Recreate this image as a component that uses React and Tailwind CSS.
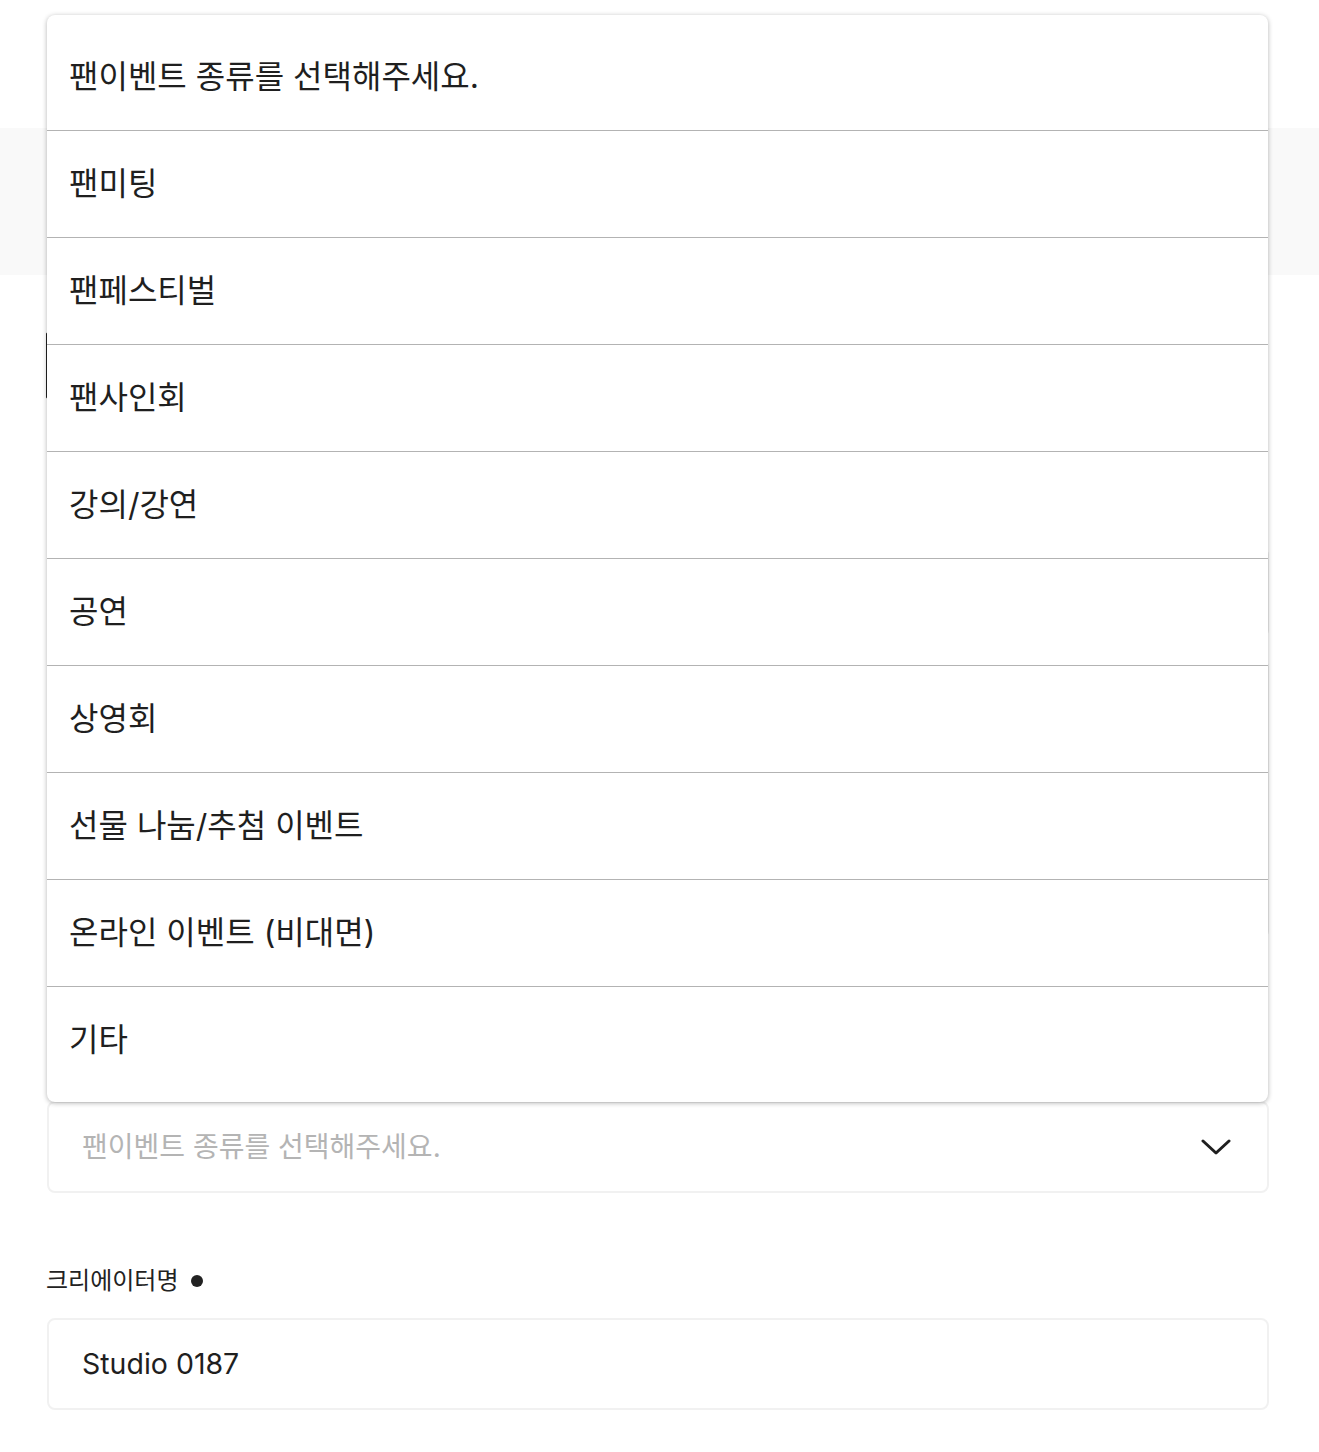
import React from 'react'

const FONT = { fontFamily: 'Inter, "Noto Sans CJK KR", sans-serif' }

const EVENT_TYPES = [
  '팬이벤트 종류를 선택해주세요.',
  '팬미팅',
  '팬페스티벌',
  '팬사인회',
  '강의/강연',
  '공연',
  '상영회',
  '선물 나눔/추첨 이벤트',
  '온라인 이벤트 (비대면)',
  '기타',
]

// ── Chevron for the closed select ─────────────────────────────
function Chevron() {
  return (
    <svg width="30" height="16" viewBox="0 0 30 16" fill="none">
      <path d="M2 2L15 14L28 2" stroke="#1f1f1f" strokeWidth="3" strokeLinecap="round" strokeLinejoin="round" />
    </svg>
  )
}

function Label({ children, required }) {
  return (
    <div className="flex items-center h-[32px] text-[24px] text-[#222]">
      <span>{children}</span>
      {required && <span className="ml-[13px] w-[12px] h-[12px] rounded-full bg-[#222]" />}
    </div>
  )
}

export default function App() {
  return (
    <div className="relative w-full min-h-[1452px] bg-white" style={FONT}>
      {/* Header */}
      <div className="h-[128px] bg-white" />
      {/* Step band */}
      <div className="h-[147px] bg-[#f9f9f9]" />

      {/* Form (top part sits behind the open menu) */}
      <div className="flex flex-col pl-[46px] pr-[50px] pb-[42px]">
        <div className="mt-[57px] w-[320px] h-[67px] rounded-[2px] border border-[#222]" />
        <div className="mt-[95px] h-[32px]" />
        <div className="mt-[21px] h-[91px] rounded-lg border border-[#ededed] ml-[1px]" />
        <div className="mt-[21px] h-[280px] rounded-lg border border-[#ededed] ml-[1px]" />
        <div className="mt-[19px] h-[32px]" />
        <div className="mt-[58px] h-[32px]" />

        {/* Closed select */}
        <div className="mt-[21px] ml-[1px] h-[92px] rounded-lg border-2 border-[#f1f1f1] flex items-center justify-between pl-[33px] pr-[36px]">
          <span className="text-[28px] text-[#b4b4b4]">팬이벤트 종류를 선택해주세요.</span>
          <Chevron />
        </div>

        <div className="mt-[72px]">
          <Label required>크리에이터명</Label>
        </div>
        <div className="mt-[21px] ml-[1px] h-[92px] rounded-lg border-2 border-[#f1f1f1] flex items-center pl-[33px]">
          <span className="text-[28.5px] text-[#1f1f1f]">Studio 0187</span>
        </div>
      </div>

      {/* Open option menu */}
      <ul className="absolute top-[15px] left-[47px] w-[1221px] bg-white rounded-lg shadow-[0_1px_5px_rgba(0,0,0,0.3)] py-[9px] divide-y divide-[#b3b3b3]">
        {EVENT_TYPES.map((t) => (
          <li key={t} className="h-[107px] last:h-[106px] flex items-center px-[22px] text-[32px] text-[#1f1f1f]">
            {t}
          </li>
        ))}
      </ul>
    </div>
  )
}
